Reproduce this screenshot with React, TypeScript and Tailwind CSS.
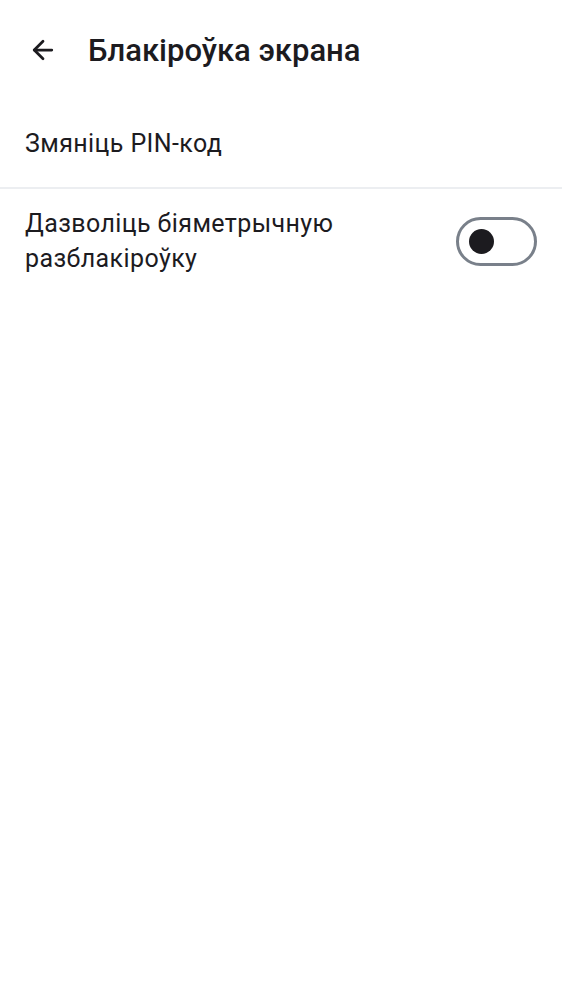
import { ArrowLeft } from 'lucide-react';

export default function App() {
    return (
        <main className="min-h-screen bg-white text-[#1c1b1f]" style={{ fontFamily: 'Roboto, "Noto Sans", sans-serif' }}>
            {/* Top bar */}
            <header className="h-[100px] flex items-center pl-[28px]">
                <ArrowLeft className="w-[30px] h-[30px] text-[#1c1b1f]" strokeWidth={2.2} />
                <h1 className="ml-[30px] text-[31px] font-medium leading-none">Блакіроўка экрана</h1>
            </header>

            {/* Change PIN */}
            <div className="h-[89px] flex items-center px-[25px] border-b-2 border-[#eceef1]">
                <span className="text-[25px] leading-none tracking-[0.4px]">Змяніць PIN-код</span>
            </div>

            {/* Biometric toggle */}
            <div className="flex items-center justify-between pl-[25px] pr-[25px] pt-[17px]">
                <p className="text-[25px] leading-[35px] tracking-[0.4px] max-w-[360px]">
                    Дазволіць біяметрычную разблакіроўку
                </p>
                <div className="w-[81px] h-[49px] rounded-full border-[3px] border-[#79808a] flex items-center pl-[10px]">
                    <div className="w-[25px] h-[25px] rounded-full bg-[#1c1b1f]" />
                </div>
            </div>
        </main>
    );
}
